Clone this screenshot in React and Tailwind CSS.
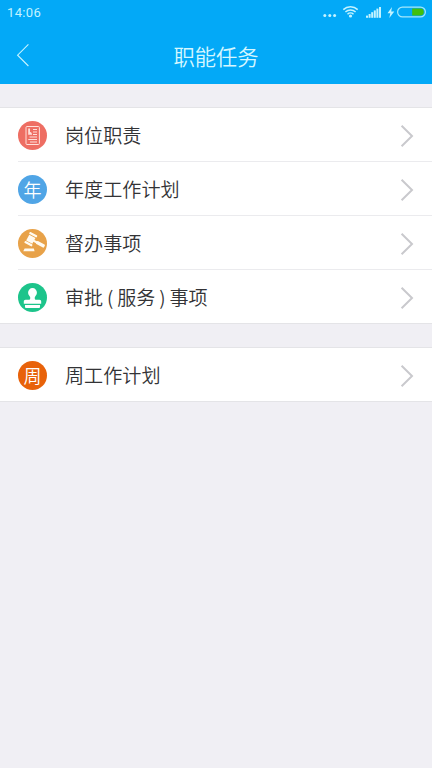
import React from "react";

function StatusBar() {
  return (
    <div className="flex h-[26px] items-center justify-between pl-[7px] pr-[5px]">
      <span className="font-['Roboto','Liberation_Sans',sans-serif] text-[13px] font-normal leading-[26px] tracking-[0.35px] text-[#c4f3ff]">
        14:06
      </span>
      <svg width="105" height="26" viewBox="0 0 105 26" fill="none">
        <g fill="#c4f3ff">
          <circle cx="2.8" cy="15.5" r="1.5" />
          <circle cx="7.8" cy="15.5" r="1.5" />
          <circle cx="12.6" cy="15.5" r="1.5" />
          <circle cx="28.5" cy="16" r="1.6" />
          <rect x="44" y="15.6" width="2" height="2.2" />
          <rect x="46.6" y="14" width="2" height="3.8" />
          <rect x="49.2" y="12.2" width="2" height="5.6" />
          <rect x="51.8" y="10.4" width="2" height="7.4" />
          <rect x="54.4" y="8.6" width="2" height="9.2" />
          <rect x="57" y="7" width="2" height="10.8" />
          <path d="M70 7 65.5 13.2h2.8L67.3 18 72.3 11.4h-3.1z" />
        </g>
        <g stroke="#c4f3ff" strokeWidth="1.5">
          <path d="M21.3 9.6a10.5 10.5 0 0 1 14.4 0" />
          <path d="M23.4 12a7.4 7.4 0 0 1 10.2 0" />
          <path d="M25.5 14.2a4.4 4.4 0 0 1 6 0" />
        </g>
        <rect x="75.6" y="7.1" width="27.8" height="9.8" rx="4.9" stroke="#a5e8fb" strokeWidth="1.2" />
        <path d="M90.2 8.6h8.2a3.4 3.4 0 0 1 0 6.8h-8.2z" fill="#42bf0b" />
      </svg>
    </div>
  );
}

function DocumentIcon() {
  return (
    <svg width="29" height="29" viewBox="0 0 29 29" fill="none" stroke="#ffe0da">
      <rect x="8" y="5.5" width="13.4" height="18" rx="1" strokeWidth="1" />
      <path d="M15 8.5h4M15 11h4M15 13.5h4M11.5 16h7.5M10.3 18.5h8.7M12 21h7" strokeWidth="1" />
      <path d="M10.2 7.6v6.2H14c0-1.7-.5-2.4-2-2.8V7.6z" fill="#ffe0da" stroke="none" />
    </svg>
  );
}

function GavelIcon() {
  return (
    <svg width="29" height="29" viewBox="0 0 29 29" fill="#fffaf0">
      <g transform="translate(12.8 10.2) rotate(28)">
        <rect x="-3.5" y="-3.3" width="7" height="6.6" />
        <rect x="-4.3" y="-6.2" width="8.6" height="2.2" rx=".8" />
        <rect x="-4.3" y="4" width="8.6" height="2.2" rx=".8" />
        <rect x="3" y="-1.1" width="5" height="2.2" />
        <rect x="6.4" y="-1.7" width="9" height="3.4" rx=".8" />
      </g>
      <path d="M6.6 19.4h9.2l.8 2.8H5.3z" />
    </svg>
  );
}

function StampIcon() {
  return (
    <svg width="29" height="29" viewBox="0 0 29 29" fill="#fff">
      <path d="M14.5 5a4.5 4.5 0 0 1 4.4 4.6c0 1.7-.8 2.7-1.7 3.9-.7.9-.7 2.9.4 3.2h3.9c1 0 1.7.8 1.7 1.7v2.4H5.8v-2.4c0-.9.7-1.7 1.7-1.7h3.9c1.1-.3 1.1-2.3.4-3.2-.9-1.2-1.7-2.2-1.7-3.9A4.5 4.5 0 0 1 14.5 5z" />
      <path d="M7 21.9h15v2a1 1 0 0 1-1 1H8a1 1 0 0 1-1-1z" />
    </svg>
  );
}

function Row({ color, icon, children, last }) {
  return (
    <div className={`relative flex items-center pl-[18px] pr-[18px] ${last ? "h-[53px] pt-px" : "h-[54px]"}`}>
      <span className={`flex size-[29px] shrink-0 items-center justify-center rounded-full text-[18px] font-[350] leading-[29px] text-white ${color}`}>
        {icon}
      </span>
      <span className="ml-[18px] flex-1 whitespace-nowrap text-[19.1px] leading-[28px] text-[#333336]">{children}</span>
      <svg className="mt-px" width="14" height="24" viewBox="0 0 14 24" fill="none" stroke="#c9c9cd" strokeWidth="2">
        <path d="M1.6 1.8 12 12 1.6 22.2" />
      </svg>
      {!last && <span className="absolute bottom-0 left-[18px] right-0 h-px bg-[#ebebee]" />}
    </div>
  );
}

function Group({ children }) {
  return <section className="border-y border-[#e4e4e7] bg-white">{children}</section>;
}

export default function App() {
  return (
    <div className="h-[768px] w-[432px] overflow-hidden bg-[#f0eff4] font-['Noto_Sans_CJK_SC',sans-serif] font-[350]">
      <header className="h-[84px] bg-[#03a9f7]">
        <StatusBar />
        <div className="grid h-[58px] grid-cols-[60px_1fr_60px] items-center">
          <svg className="ml-[16px]" width="14" height="24" viewBox="0 0 14 24" fill="none" stroke="#c9f4ff" strokeWidth="1.1">
            <path d="M12.4 1.4 1.6 12.2 12.4 23" />
          </svg>
          <h1 className="pt-px text-center text-[21.3px] font-[350] leading-[30px] text-[#d5f7ff]">职能任务</h1>
        </div>
      </header>
      <main className="flex flex-col gap-[23px] pt-[23px]">
        <Group>
          <Row color="bg-[#ee6e63]" icon={<DocumentIcon />}>岗位职责</Row>
          <Row color="bg-[#50a5e6]" icon="年">年度工作计划</Row>
          <Row color="bg-[#e8a249]" icon={<GavelIcon />}>督办事项</Row>
          <Row color="bg-[#1dc48b]" icon={<StampIcon />} last>
            审批<span className="inline-block w-[14px] text-center">(</span>服务
            <span className="inline-block w-[14px] text-center">)</span>事项
          </Row>
        </Group>
        <Group>
          <Row color="bg-[#e8620a]" icon="周" last>周工作计划</Row>
        </Group>
      </main>
    </div>
  );
}
